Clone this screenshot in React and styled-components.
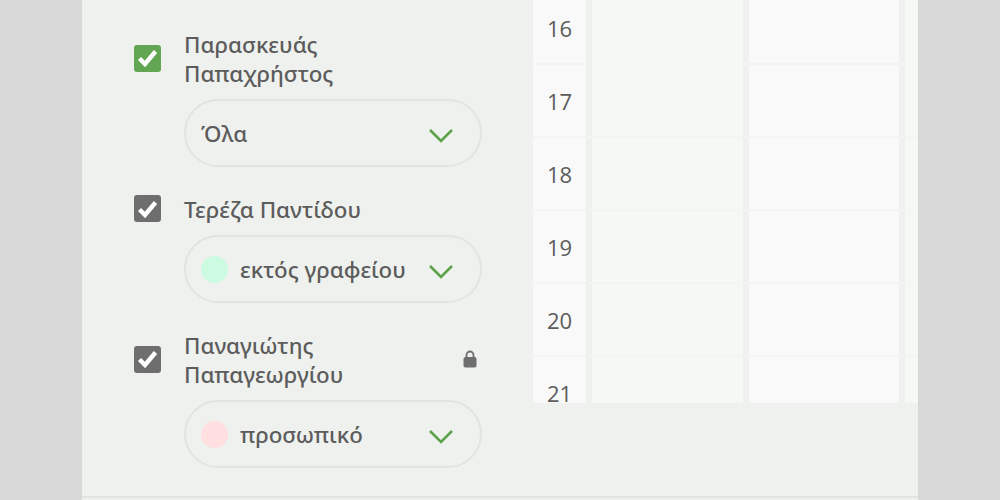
import React from 'react'
import styled, { createGlobalStyle } from 'styled-components'

const Global = createGlobalStyle`
  html, body {
    margin: 0;
    height: 100%;
    overflow: hidden;
    background: #d8d8d8;
  }
`

const Page = styled.div`
  width: 836px;
  height: 500px;
  margin-left: 82px;
  background: #eff1ee;
  display: flex;
  flex-direction: column;
  overflow: hidden;
  font-family: "Open Sans", sans-serif;
  color: #5c5c5c;
`

const Main = styled.div`
  flex: 1;
  display: flex;
  min-height: 0;
`

const Sidebar = styled.div`
  width: 451px;
  box-sizing: border-box;
  padding: 31px 0 0 52px;
  display: flex;
  flex-direction: column;
  gap: 29px;
`

const Person = styled.div`
  display: flex;
  flex-direction: column;
  gap: 10px;
`

const PersonRow = styled.div`
  display: flex;
  align-items: center;
  width: 343px;
`

const Checkbox = styled.span`
  width: 27px;
  height: 27px;
  flex: none;
  margin: -4px 23px 0 0;
  border-radius: 3px;
  display: flex;
  align-items: center;
  justify-content: center;
  background: ${p => (p.$active ? '#62a552' : '#6e6e6e')};
`

const Name = styled.div`
  width: ${p => (p.$wrap ? '175px' : 'auto')};
  margin: -1px 0 1px;
  font-family: "Noto Sans", sans-serif;
  font-size: 22.3px;
  font-weight: 500;
  line-height: 29px;
`

const Lock = styled.svg`
  width: 14px;
  height: 18px;
  margin-left: auto;
  margin-top: -4px;
`

const Select = styled.div`
  width: 298px;
  height: 68px;
  margin-left: 50px;
  box-sizing: border-box;
  border: 2px solid #e2e4e1;
  border-radius: 34px;
  padding: 0 26px 0 15px;
  display: flex;
  align-items: center;
  font-family: "Noto Sans", sans-serif;
  font-size: 22.3px;
  font-weight: 500;
`

const Dot = styled.span`
  width: 27px;
  height: 27px;
  flex: none;
  margin-right: 12px;
  border-radius: 50%;
  background: ${p => p.$color};
`

const SelectText = styled.span`
  flex: 1;
  margin-top: 1px;
`

const Chevron = styled.svg`
  width: 26px;
  height: 16px;
  flex: none;
  margin-top: 6px;
`

const Calendar = styled.div`
  flex: 1;
  height: 403px;
  overflow: hidden;
`

const Rows = styled.div`
  margin-top: -8px;
`

const Row = styled.div`
  display: grid;
  grid-template-columns: 53px 151px 150px 13px;
  column-gap: 6px;
  height: 73px;
  box-sizing: border-box;
  border-bottom: 2px solid #f3f5f2;
`

const Hour = styled.div`
  background: #f8f9f8;
  font-size: 22px;
  display: flex;
  align-items: center;
  padding-left: 14px;
  box-sizing: border-box;
`

const Cell = styled.div`
  background: ${p => (p.$alt ? '#f8f9f8' : '#f6f8f6')};
`

const Footer = styled.div`
  height: 4px;
  flex: none;
  border-top: 2px solid #e2e4e1;
  box-sizing: border-box;
`

const people = [
  { name: 'Παρασκευάς Παπαχρήστος', value: 'Όλα', active: true, wrap: true },
  { name: 'Τερέζα Παντίδου', value: 'εκτός γραφείου', dot: '#ccfbe2' },
  { name: 'Παναγιώτης Παπαγεωργίου', value: 'προσωπικό', dot: '#ffdfe0', locked: true, wrap: true },
]

const hours = [16, 17, 18, 19, 20, 21]

function App() {
  return (
    <Page>
      <Global />
      <Main>
        <Sidebar>
          {people.map(person => (
            <Person key={person.name}>
              <PersonRow>
                <Checkbox $active={person.active}>
                  <svg width="21" height="18" viewBox="0 0 21 18" fill="none">
                    <path d="M2.5 9.5 L8 15 L18.5 2.5" stroke="#fff" strokeWidth="4.4" />
                  </svg>
                </Checkbox>
                <Name $wrap={person.wrap}>{person.name}</Name>
                {person.locked && (
                  <Lock viewBox="0 0 14 18" fill="none">
                    <path d="M3.5 8 V5 a3.5 3.5 0 0 1 7 0 V8" stroke="#6e6e6e" strokeWidth="1.8" />
                    <rect x="0.5" y="7" width="13" height="10.5" rx="2" fill="#6e6e6e" />
                  </Lock>
                )}
              </PersonRow>
              <Select>
                {person.dot && <Dot $color={person.dot} />}
                <SelectText>{person.value}</SelectText>
                <Chevron viewBox="0 0 26 16" fill="none">
                  <path d="M2 2 L13 13 L24 2" stroke="#5ba24a" strokeWidth="2.6" />
                </Chevron>
              </Select>
            </Person>
          ))}
        </Sidebar>
        <Calendar>
          <Rows>
            {hours.map(hour => (
              <Row key={hour}>
                <Hour>{hour}</Hour>
                <Cell />
                <Cell $alt />
                <Cell />
              </Row>
            ))}
          </Rows>
        </Calendar>
      </Main>
      <Footer />
    </Page>
  )
}

export default App
